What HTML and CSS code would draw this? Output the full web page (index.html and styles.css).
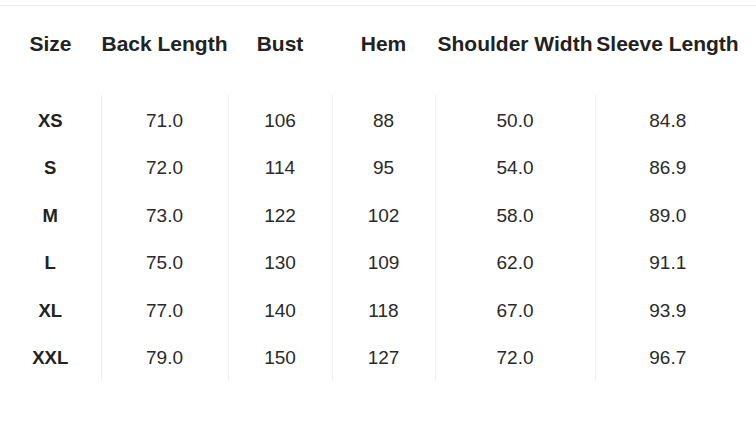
FILE: index.html
```html
<!DOCTYPE html>
<html>
<head>
<meta charset="utf-8">
<link rel="stylesheet" href="styles.css">
</head>
<body>
<div class="page">
  <table class="size-table">
    <colgroup>
      <col class="c1"><col class="c2"><col class="c3"><col class="c4"><col class="c5"><col class="c6">
    </colgroup>
    <thead>
      <tr>
        <th>Size</th><th>Back Length</th><th>Bust</th><th>Hem</th><th>Shoulder Width</th><th>Sleeve Length</th>
      </tr>
    </thead>
    <tbody>
      <tr><td class="size">XS</td><td>71.0</td><td>106</td><td>88</td><td>50.0</td><td>84.8</td></tr>
      <tr><td class="size">S</td><td>72.0</td><td>114</td><td>95</td><td>54.0</td><td>86.9</td></tr>
      <tr><td class="size">M</td><td>73.0</td><td>122</td><td>102</td><td>58.0</td><td>89.0</td></tr>
      <tr><td class="size">L</td><td>75.0</td><td>130</td><td>109</td><td>62.0</td><td>91.1</td></tr>
      <tr><td class="size">XL</td><td>77.0</td><td>140</td><td>118</td><td>67.0</td><td>93.9</td></tr>
      <tr><td class="size">XXL</td><td>79.0</td><td>150</td><td>127</td><td>72.0</td><td>96.7</td></tr>
    </tbody>
  </table>
</div>
</body>
</html>
```
FILE: styles.css
```css
html, body {
  margin: 0;
  padding: 0;
  background: #fff;
}
body {
  font-family: "Liberation Sans", Arial, sans-serif;
  color: #222;
}
.page {
  margin-top: 5px;
  border-top: 1px solid #ececec;
  height: 437px;
}
.size-table {
  border-collapse: collapse;
  table-layout: fixed;
  width: 740px;
}
.c1 { width: 101px; }
.c2 { width: 127px; }
.c3 { width: 104px; }
.c4 { width: 103px; }
.c5 { width: 160px; }
.c6 { width: 145px; }
.size-table th {
  font-size: 21px;
  font-weight: bold;
  line-height: 24px;
  padding: 26px 0 39px;
  text-align: center;
  white-space: nowrap;
  color: #222;
}
.size-table tbody tr {
  height: 47.5px;
}
.size-table td {
  font-size: 19px;
  line-height: 24px;
  padding: 4px 0 0;
  text-align: center;
  vertical-align: middle;
  color: #2a2a2a;
  border-left: 1px solid #eeeeee;
}
.size-table td.size {
  border-left: none;
  font-weight: bold;
  font-size: 18.5px;
  color: #222;
}
```
